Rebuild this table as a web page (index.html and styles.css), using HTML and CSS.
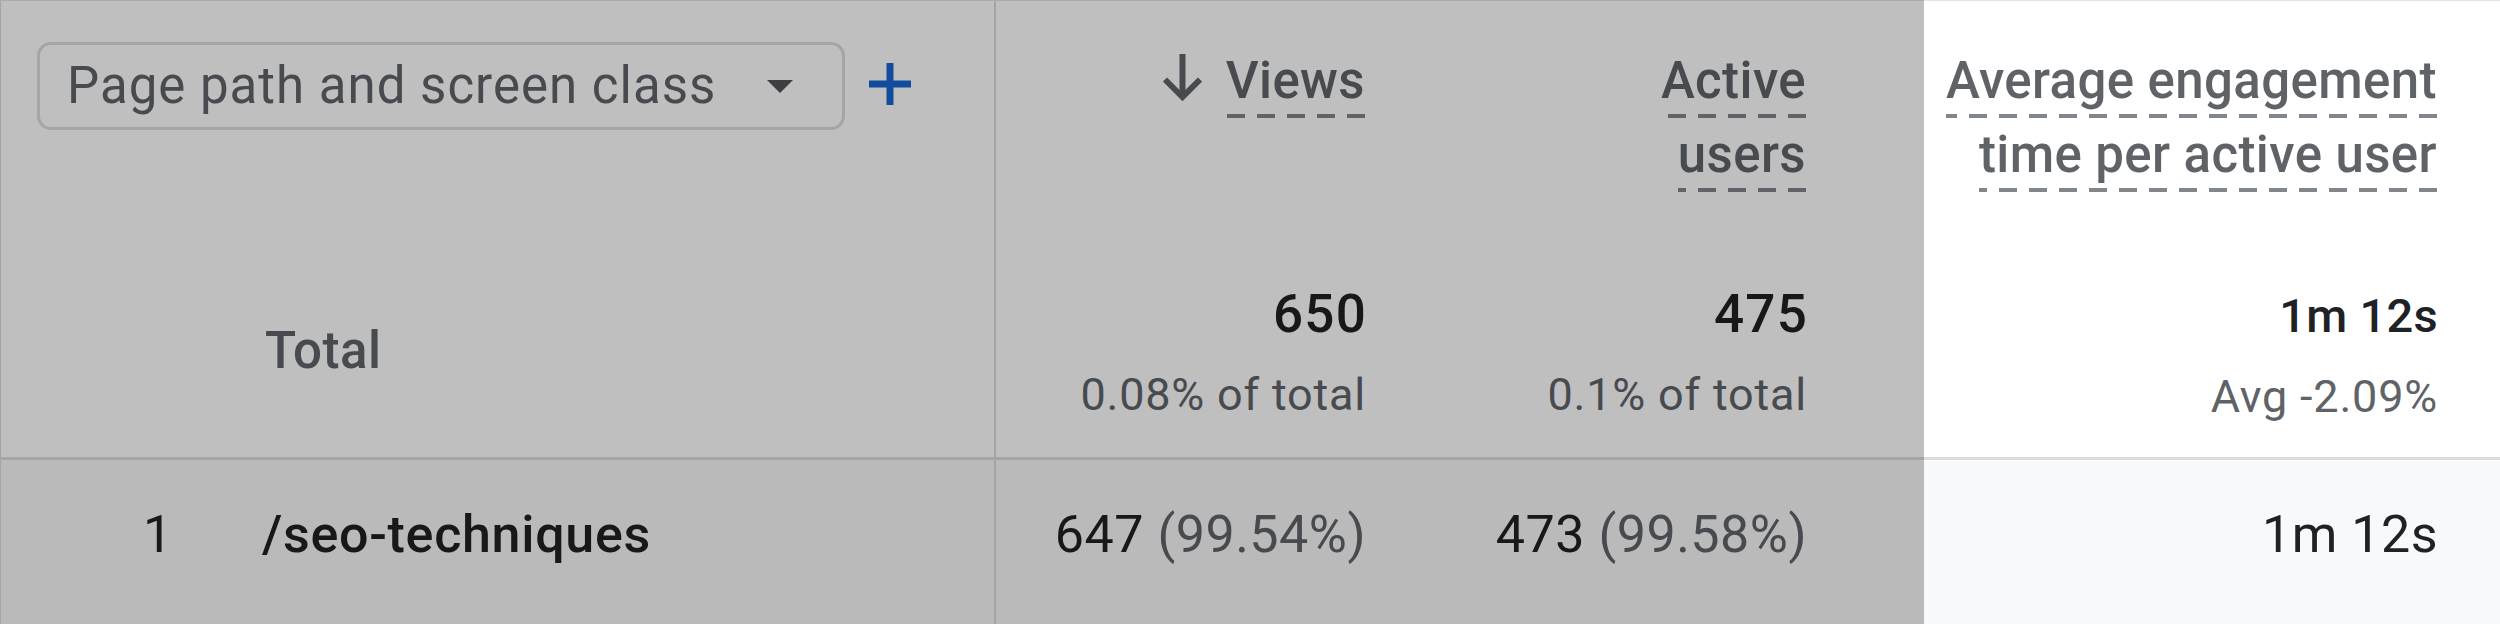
FILE: index.html
```html
<!DOCTYPE html>
<html lang="en">
<head>
<meta charset="utf-8">
<title>Pages and screens</title>
<link rel="stylesheet" href="styles.css">
</head>
<body>
<div class="report">
  <div class="table">
    <div class="cell dim head">
      <div class="dropdown">
        <span class="dd-label">Page path and screen class</span>
        <svg class="dd-caret" viewBox="0 0 26 13" width="26" height="13"><path d="M0 0H26L13 13Z"/></svg>
      </div>
      <svg class="add" viewBox="0 0 42 42" width="42" height="42"><rect x="0" y="17.5" width="42" height="7"/><rect x="17.5" y="0" width="7" height="42"/></svg>
    </div>
    <div class="cell metric head">
      <div class="hrow">
        <svg class="sort" viewBox="0 0 43 48" width="43" height="48"><path d="M21.5 0V42"/><path d="M4 25.5L21.5 43L39 25.5"/></svg>
        <span class="hl">Views</span>
      </div>
    </div>
    <div class="cell metric head">
      <div class="hlines"><span class="hl">Active</span><span class="hl">users</span></div>
    </div>
    <div class="cell metric head">
      <div class="hlines"><span class="hl">Average engagement</span><span class="hl">time per active user</span></div>
    </div>

    <div class="cell dim total"><span class="total-label">Total</span></div>
    <div class="cell metric total"><div class="tv">650</div><div class="ts">0.08% of total</div></div>
    <div class="cell metric total"><div class="tv">475</div><div class="ts">0.1% of total</div></div>
    <div class="cell metric total"><div class="tv tv-time">1m 12s</div><div class="ts">Avg -2.09%</div></div>

    <div class="cell dim row"><span class="idx">1</span><span class="path">/seo-techniques</span></div>
    <div class="cell metric row"><span class="val">647</span> <span class="pct">(99.54%)</span></div>
    <div class="cell metric row"><span class="val">473</span> <span class="pct">(99.58%)</span></div>
    <div class="cell metric row"><span class="val">1m 12s</span></div>
  </div>
  <div class="shade"></div>
</div>
</body>
</html>
```

FILE: styles.css
```css
* { box-sizing: border-box; }

html, body {
  margin: 0;
  padding: 0;
  background: #ffffff;
}

body {
  width: 2500px;
  height: 624px;
  overflow: hidden;
  font-family: Roboto, "Noto Sans", Arial, sans-serif;
  color: #202124;
}

.report {
  position: relative;
  width: 2500px;
  height: 624px;
}

.table {
  display: grid;
  grid-template-columns: 996px 432px 441px 631px;
  grid-template-rows: 250px 209px 165px;
  width: 2500px;
  height: 624px;
  border-top: 1px solid #e3e4e6;
}

.cell.dim {
  border-left: 1px solid #dadce0;
  border-right: 2px solid #dadce0;
}

.cell.metric {
  padding-right: 63px;
  text-align: right;
}

/* header */
.cell.head.dim {
  display: flex;
  align-items: flex-start;
  gap: 24px;
  padding: 41px 0 0 36px;
}

.dropdown {
  width: 808px;
  height: 88px;
  border: 3px solid #dadce0;
  border-radius: 14px;
  display: flex;
  align-items: center;
  justify-content: space-between;
  padding: 0 49px 0 27px;
}

.dd-label {
  font-size: 51px;
  line-height: 60px;
  color: #5f6368;
  letter-spacing: 1px;
  white-space: nowrap;
}

.dd-caret { fill: #505357; display: block; }

.add {
  display: block;
  fill: #1967d2;
  margin-top: 21px;
}

.cell.head.metric {
  padding-top: 43px;
  display: flex;
  justify-content: flex-end;
  align-items: flex-start;
}

.hrow {
  display: flex;
  align-items: flex-start;
}

.sort {
  display: block;
  margin-top: 10px;
  margin-right: 22px;
  fill: none;
  stroke: #5f6368;
  stroke-width: 6;
}

.hlines {
  display: flex;
  flex-direction: column;
  align-items: flex-end;
}

.hl {
  display: inline-block;
  font-size: 51px;
  font-weight: 500;
  line-height: 74px;
  letter-spacing: 0.4px;
  color: #5f6368;
  white-space: nowrap;
  background-image: repeating-linear-gradient(to left, #80868b 0 18px, transparent 18px 30px);
  background-repeat: no-repeat;
  background-position: right bottom;
  background-size: 100% 4px;
}

/* totals row */
.cell.total {
  border-bottom: 3px solid #dadce0;
}

.cell.total.dim {
  padding: 70px 0 0 264px;
}

.total-label {
  font-size: 51px;
  font-weight: 500;
  line-height: 60px;
  letter-spacing: 0.5px;
  color: #5f6368;
}

.cell.total.metric {
  padding-top: 33px;
}

.tv {
  font-size: 53px;
  font-weight: 500;
  line-height: 60px;
  letter-spacing: 1.2px;
  margin-right: -2px;
  color: #202124;
}

.tv-time {
  font-size: 47px;
  letter-spacing: 0.3px;
  margin-right: -1px;
  padding-top: 2px;
}

.ts {
  margin-top: 21px;
  margin-right: -1px;
  font-size: 45px;
  line-height: 60px;
  color: #5f6368;
  letter-spacing: 0.8px;
}

/* data row */
.cell.row {
  background: #f8f9fa;
  padding-top: 45px;
  font-size: 52px;
  line-height: 60px;
  letter-spacing: 0.5px;
}

.cell.row.metric {
  padding-right: 62px;
}

.cell.row.dim {
  display: flex;
  padding-left: 142px;
}

.idx {
  width: 119px;
  color: #202124;
}

.path {
  font-weight: 500;
  letter-spacing: 0.7px;
  color: #202124;
}

.val { color: #202124; }
.pct { color: #5f6368; }

/* screenshot highlight shade over the non-focused columns */
.shade {
  position: absolute;
  top: 0;
  left: 0;
  width: 1924px;
  height: 624px;
  background: rgba(0, 0, 0, 0.25);
  pointer-events: none;
}
```
